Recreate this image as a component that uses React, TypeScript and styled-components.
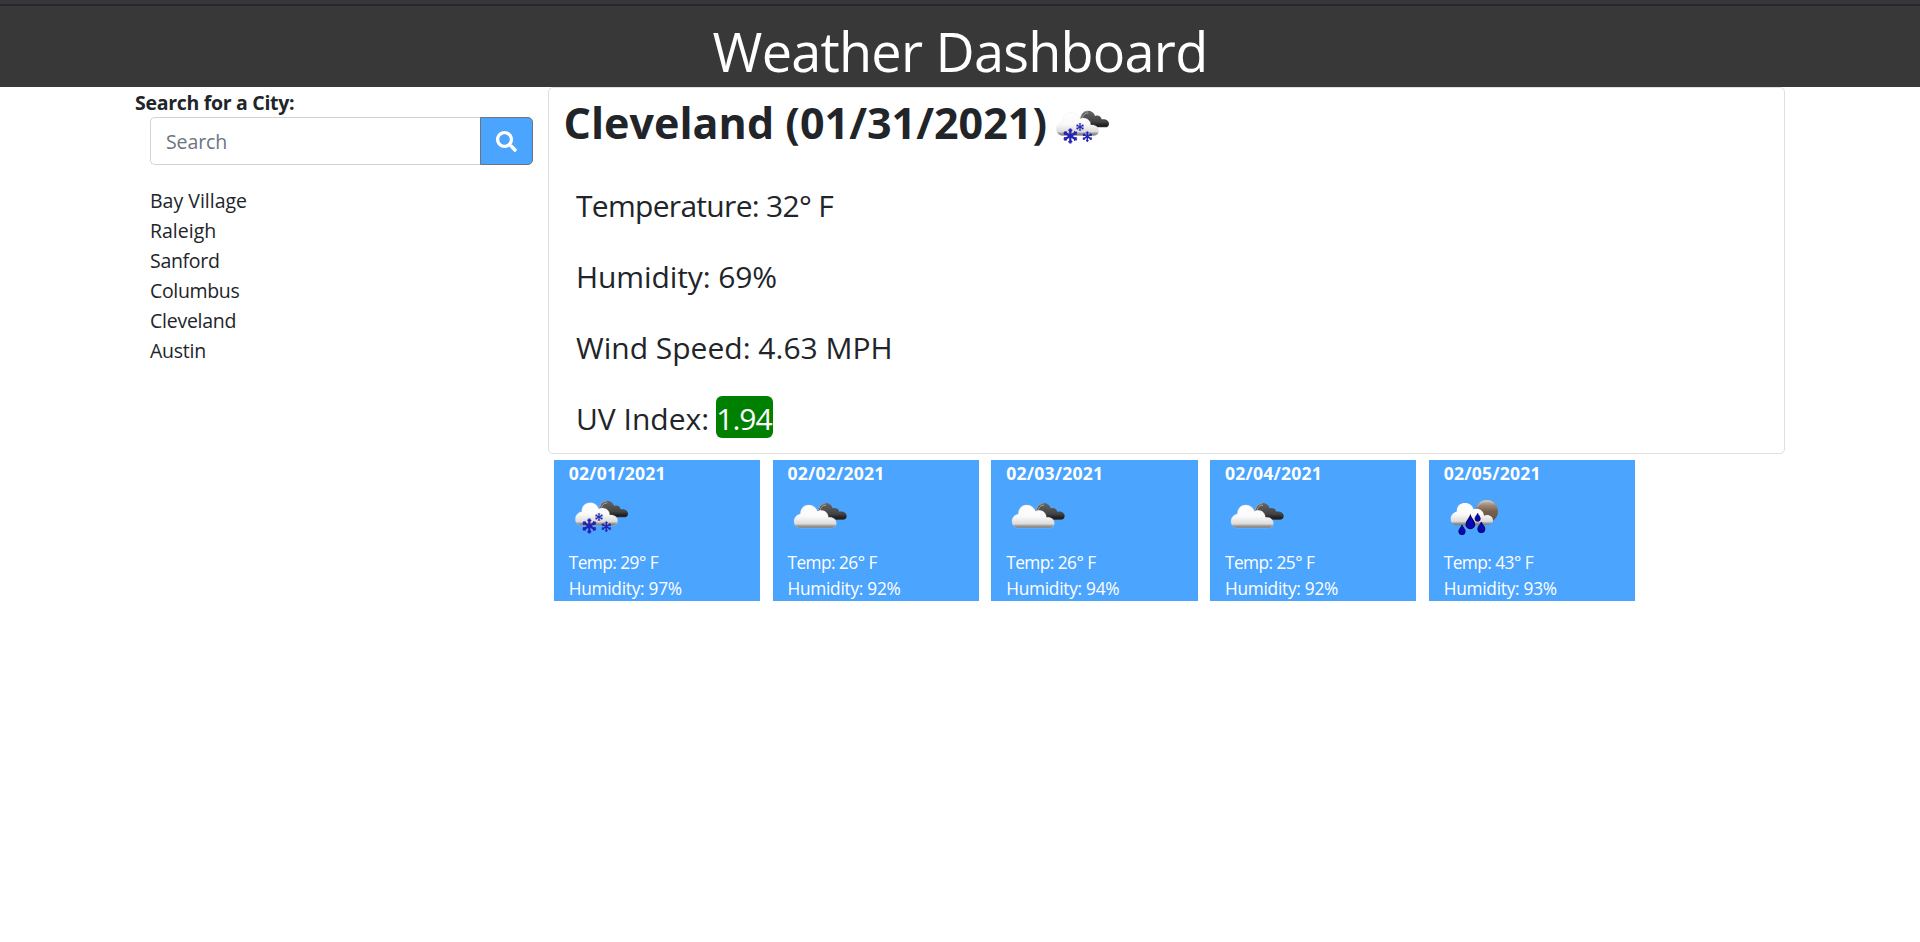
import React from 'react';
import styled, { createGlobalStyle } from 'styled-components';
import { FaSearch } from 'react-icons/fa';

const GlobalStyle = createGlobalStyle`
  *, *::before, *::after { box-sizing: border-box; }
  body {
    margin: 0;
    background: #fff;
    color: #212529;
    font-family: "Open Sans", "Noto Sans", sans-serif;
    font-size: 19.5px;
    line-height: 30px;
  }
`;

const TopStrip = styled.div`
  height: 6px;
  background: #36373c;
  border-bottom: 2px solid #28282a;
`;

const Header = styled.header`
  height: 81px;
  padding-top: 9px;
  background: #383838;
  color: #fff;
  text-align: center;
`;

const Title = styled.h1`
  margin: 0;
  font-size: 54px;
  font-weight: 400;
  line-height: 72px;
  letter-spacing: -0.75px;
`;

const Container = styled.main`
  display: flex;
  align-items: flex-start;
  width: 1650px;
  margin: 0 auto;
`;

const Sidebar = styled.aside`
  flex: 0 0 412.5px;
`;

const SearchLabel = styled.label`
  display: block;
  padding-top: 2px;
  font-weight: 700;
  line-height: 28px;
  letter-spacing: -0.3px;
`;

const SearchGroup = styled.form`
  display: flex;
  height: 48px;
  margin: 0 15px 21px;
`;

const SearchInput = styled.input`
  flex: 1;
  min-width: 0;
  padding: 2px 15px 0;
  border: 1px solid #ced4da;
  border-right: 0;
  border-radius: 5px 0 0 5px;
  background: #fff;
  color: #495057;
  font: inherit;
  letter-spacing: -0.1px;
  outline: none;

  &::placeholder {
    color: #6c757d;
    opacity: 1;
  }
`;

const SearchButton = styled.button`
  display: flex;
  align-items: center;
  justify-content: center;
  width: 53px;
  padding: 0;
  border: 1px solid #6c757d;
  border-radius: 0 5px 5px 0;
  background: #4ba4fe;
  color: #fff;
  font-size: 21px;
`;

const CityList = styled.ul`
  margin: 0;
  padding: 0 15px;
  list-style: none;
`;

const City = styled.li<{ $tracking: number }>`
  letter-spacing: ${({ $tracking }) => $tracking}px;
`;

const Content = styled.div`
  flex: 0 0 1237.5px;
`;

const CurrentPanel = styled.section`
  height: 367px;
  padding: 2px 15px 0;
  border: 1px solid #dfdfdf;
  border-radius: 5px;
`;

const CurrentHeading = styled.div`
  display: flex;
  align-items: center;
  height: 66px;
  margin-bottom: 14px;
`;

const CityName = styled.h2`
  margin: 0;
  font-size: 43px;
  font-weight: 700;
  line-height: 66px;
  letter-spacing: 0.03px;
  white-space: nowrap;
`;

const HeadingIcon = styled.div`
  display: flex;
  margin: 8px 0 0 3px;
`;

const Reading = styled.p<{ $tracking?: number }>`
  display: flex;
  align-items: center;
  height: 71px;
  margin: 0;
  padding-left: 12.5px;
  font-size: 30px;
  line-height: 42px;
  letter-spacing: ${({ $tracking = 0 }) => $tracking}px;
`;

const UvBadge = styled.span`
  width: 57px;
  height: 42px;
  margin: 0 0 4px 7px;
  border-radius: 6px;
  background: #008000;
  color: #fff;
  line-height: 46px;
  letter-spacing: -0.9px;
`;

const Forecast = styled.section`
  display: flex;
  gap: 12.5px;
  padding: 6px 6.25px;
`;

const DayCard = styled.article`
  width: 206.25px;
  height: 141px;
  padding-left: 15px;
  background: #4ba4fe;
  color: #fff;
  font-size: 17.3px;
  line-height: 26.4px;

  svg {
    display: block;
    margin-bottom: 1px;
  }
`;

const DayDate = styled.div`
  font-size: 17.6px;
  font-weight: 700;
  letter-spacing: 0.2px;
`;

const DayLine = styled.div<{ $tracking: number }>`
  letter-spacing: ${({ $tracking }) => $tracking}px;
`;

type Condition = 'snow' | 'clouds' | 'rain';

const CLOUD =
  'M50 123C37 123 31 113 31 103C31 91 40 83 50 81C50 65 60 54 75 54C89 54 98 62 101 73C110 67 125 70 131 80Q134 85 134 91C147 89 158 96 158 109C158 118 152 123 144 123Z';

const Snowflake = ({ x, y, r }: { x: number; y: number; r: number }) => (
  <g transform={`translate(${x} ${y}) scale(${r / 10})`} stroke="#2323b4" fill="none">
    {[0, 60, 120, 180, 240, 300].map((a) => (
      <g key={a} transform={`rotate(${a})`}>
        <path d="M0 0V-9.8" strokeWidth="2.8" />
        <path d="M-2.5 -8.2L0 -5.6L2.5 -8.2" strokeWidth="1.6" />
      </g>
    ))}
  </g>
);

const Drop = ({ x, y, h }: { x: number; y: number; h: number }) => (
  <path
    transform={`translate(${x} ${y}) scale(${h / 20})`}
    d="M0 0C1.5 5 6.6 8 6.6 13.4A6.6 6.6 0 0 1 -6.6 13.4C-6.6 8 -1.5 5 0 0Z"
    fill="#0808b4"
    stroke="#05055c"
    strokeWidth="1.8"
  />
);

const WeatherIcon = ({ kind, id }: { kind: Condition; id: string }) => (
  <svg width="62.5" height="62.5" viewBox="12 4 187.5 187.5" aria-label={kind}>
    <defs>
      <linearGradient id={`${id}-light`} x1="0" y1="0" x2="0" y2="1">
        <stop offset="0" stopColor="#fff" />
        <stop offset="0.5" stopColor="#fafafa" />
        <stop offset="0.82" stopColor="#dcdcdc" />
        <stop offset="0.91" stopColor="#999" />
        <stop offset="1" stopColor="#777" />
      </linearGradient>
      <linearGradient id={`${id}-dark`} x1="0" y1="0" x2="0" y2="1">
        <stop offset="0" stopColor="#646464" />
        <stop offset="0.65" stopColor="#444" />
        <stop offset="0.9" stopColor="#1c1c1c" />
        <stop offset="1" stopColor="#333" />
      </linearGradient>
      <linearGradient id={`${id}-moon`} x1="0" y1="0" x2="0" y2="1">
        <stop offset="0" stopColor="#cfc5bc" />
        <stop offset="0.25" stopColor="#9b8675" />
        <stop offset="0.5" stopColor="#755f4d" />
        <stop offset="1" stopColor="#65513f" />
      </linearGradient>
    </defs>
    {kind === 'rain' ? (
      <>
        <circle cx="140" cy="80" r="34" fill={`url(#${id}-moon)`} />
        <path d="M112 67A31 31 0 0 1 160 56" fill="none" stroke="#d8d0c8" strokeWidth="3" opacity=".65" />
        <path
          d="M50 122C37 122 32 112 32 103C32 91 41 83 50 81C50 65 60 55 75 55C88 55 98 63 101 74C112 68 131 75 132 93C145 87 159 95 159 107C159 116 153 120 146 120Q135 122 118 122Z"
          fill={`url(#${id}-light)`}
        />
        <Drop x={91} y={93} h={39} />
        <Drop x={66} y={121} h={29} />
        <Drop x={124} y={112} h={32} />
        <Drop x={113} y={86} h={24} />
      </>
    ) : (
      <g transform={kind === 'clouds' ? 'translate(-1 7)' : undefined}>
        <path
          d="M103 75C105 56 115 47 127 48C138 49 145 55 147 64C157 60 165 66 167 74C180 72 189 79 189 87C189 94 184 98 178 98H130Z"
          fill={`url(#${id}-dark)`}
        />
        <path
          d="M104 69C107 55 116 49 125 50M109 72C110 62 117 54 127 55"
          fill="none"
          stroke="#a8a8a8"
          strokeWidth="3"
        />
        <path
          d={CLOUD}
          fill={`url(#${id}-light)`}
          stroke="#dedede"
          strokeOpacity=".5"
          strokeWidth="1.5"
        />
        {kind === 'snow' && (
          <>
            <Snowflake x={73} y={124} r={23} />
            <Snowflake x={102} y={97} r={12.5} />
            <Snowflake x={124} y={126} r={16} />
          </>
        )}
      </g>
    )}
  </svg>
);

const cities = [
  { name: 'Bay Village', tracking: 0 },
  { name: 'Raleigh', tracking: 0 },
  { name: 'Sanford', tracking: -0.3 },
  { name: 'Columbus', tracking: -0.35 },
  { name: 'Cleveland', tracking: -0.25 },
  { name: 'Austin', tracking: -0.25 },
];

const days: { date: string; kind: Condition; temp: number; humidity: number }[] = [
  { date: '02/01/2021', kind: 'snow', temp: 29, humidity: 97 },
  { date: '02/02/2021', kind: 'clouds', temp: 26, humidity: 92 },
  { date: '02/03/2021', kind: 'clouds', temp: 26, humidity: 94 },
  { date: '02/04/2021', kind: 'clouds', temp: 25, humidity: 92 },
  { date: '02/05/2021', kind: 'rain', temp: 43, humidity: 93 },
];

export default function App() {
  return (
    <>
      <GlobalStyle />
      <TopStrip />
      <Header>
        <Title>Weather Dashboard</Title>
      </Header>
      <Container>
        <Sidebar>
          <SearchLabel htmlFor="city">Search for a City:</SearchLabel>
          <SearchGroup onSubmit={(e) => e.preventDefault()}>
            <SearchInput id="city" placeholder="Search" />
            <SearchButton type="submit" aria-label="Search">
              <FaSearch />
            </SearchButton>
          </SearchGroup>
          <CityList>
            {cities.map((city) => (
              <City key={city.name} $tracking={city.tracking}>
                {city.name}
              </City>
            ))}
          </CityList>
        </Sidebar>
        <Content>
          <CurrentPanel>
            <CurrentHeading>
              <CityName>Cleveland (01/31/2021)</CityName>
              <HeadingIcon>
                <WeatherIcon kind="snow" id="current" />
              </HeadingIcon>
            </CurrentHeading>
            <Reading $tracking={-0.7}>Temperature: 32° F</Reading>
            <Reading $tracking={-0.1}>Humidity: 69%</Reading>
            <Reading>Wind Speed: 4.63 MPH</Reading>
            <Reading>
              UV Index: <UvBadge>1.94</UvBadge>
            </Reading>
          </CurrentPanel>
          <Forecast>
            {days.map((day, i) => (
              <DayCard key={day.date}>
                <DayDate>{day.date}</DayDate>
                <WeatherIcon kind={day.kind} id={`day${i}`} />
                <DayLine $tracking={-0.55}>Temp: {day.temp}° F</DayLine>
                <DayLine $tracking={-0.27}>Humidity: {day.humidity}%</DayLine>
              </DayCard>
            ))}
          </Forecast>
        </Content>
      </Container>
    </>
  );
}
